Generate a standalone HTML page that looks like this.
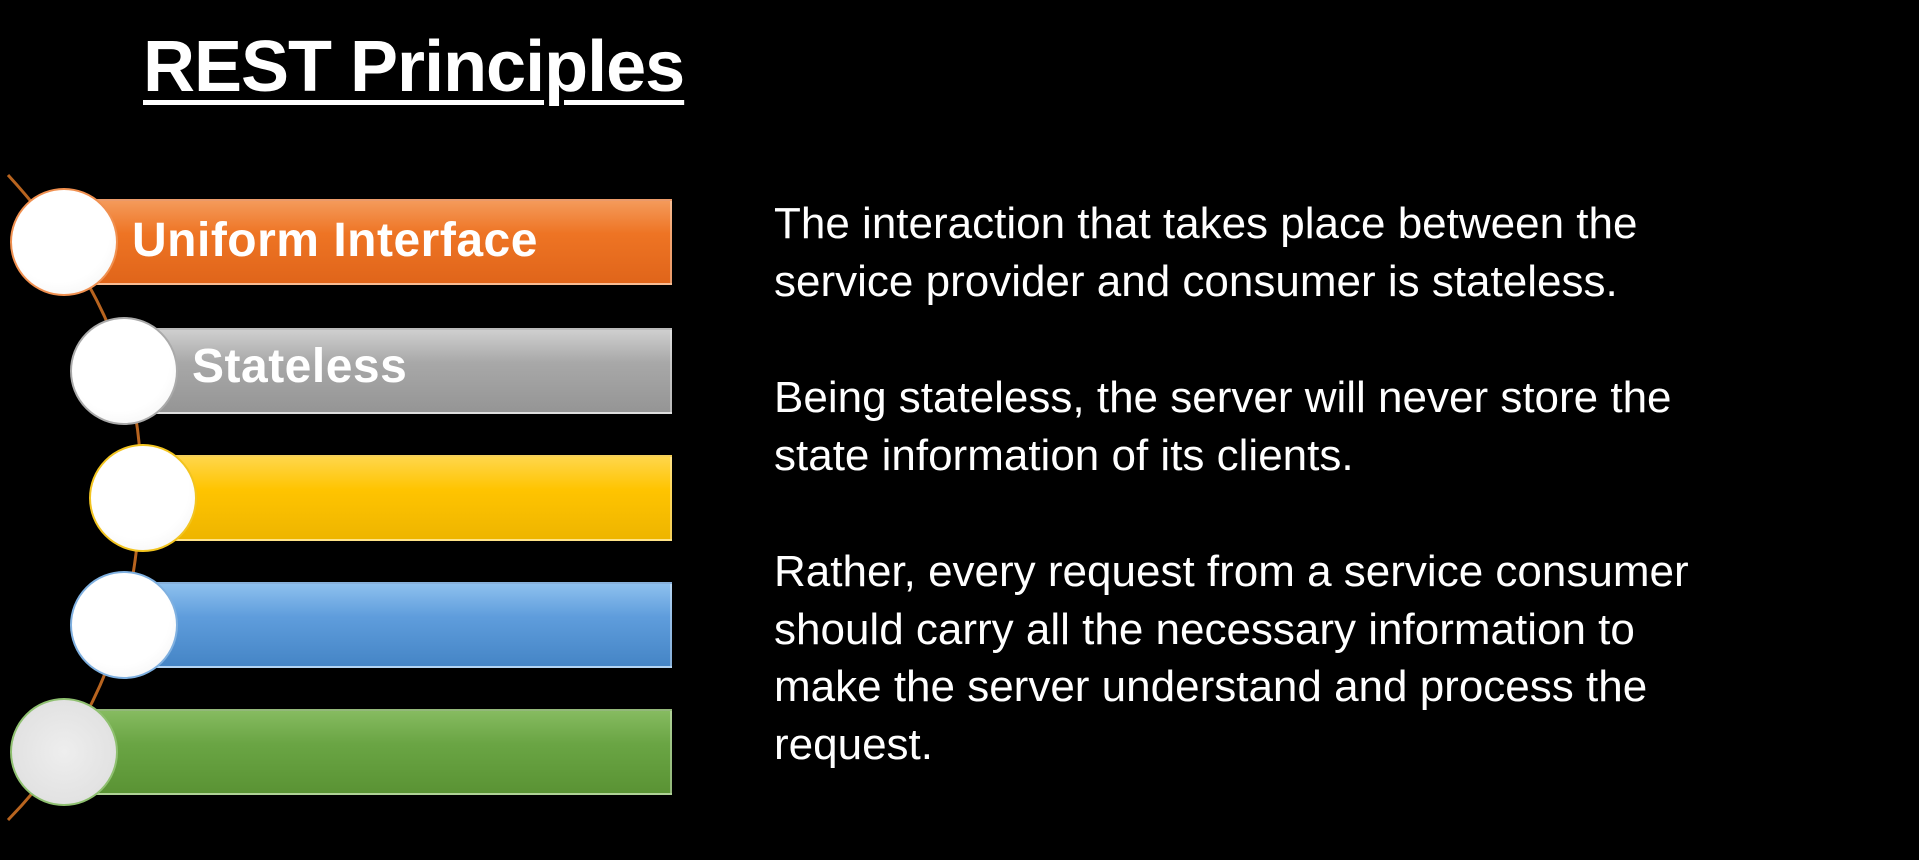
<!DOCTYPE html>
<html><head><style>
body{margin:0;width:1919px;height:860px;background:#000;overflow:hidden;position:relative;font-family:"Liberation Sans",sans-serif}
.t{position:absolute;left:143px;top:26px;font-size:72px;font-weight:bold;color:#fff;text-decoration:underline;text-decoration-thickness:5px;text-underline-offset:9px;letter-spacing:-1px}
.bar{position:absolute;height:86px;border:2px solid rgba(255,255,255,.35);box-sizing:border-box}
.c{position:absolute;width:108px;height:108px;border-radius:50%;background:radial-gradient(circle at 45% 40%,#fff 60%,#eee);box-sizing:border-box}
.lb{position:absolute;color:#fff;font-weight:bold;font-size:48px;line-height:50px;letter-spacing:0.5px}
.p{position:absolute;left:774px;color:#fff;font-size:44px;line-height:57.5px;white-space:nowrap}
</style></head><body>
<div class="t">REST Principles</div>
<svg style="position:absolute;left:0;top:0" width="300" height="860"><path d="M8 175 Q150 330 140 500 Q135 690 8 820" stroke="#b8641f" stroke-width="3" fill="none"/></svg>
<div class="bar" style="left:64px;width:608px;top:199px;background:linear-gradient(#f49a5a,#ee7424 40%,#e0651a)"></div>
<div class="bar" style="left:124px;width:548px;top:328px;background:linear-gradient(#cfcfcf,#a8a8a8 40%,#959595)"></div>
<div class="bar" style="left:143px;width:529px;top:455px;background:linear-gradient(#ffd64a,#ffc400 40%,#eeb500)"></div>
<div class="bar" style="left:124px;width:548px;top:582px;background:linear-gradient(#8dc0ee,#5f9ddc 40%,#4585c6)"></div>
<div class="bar" style="left:64px;width:608px;top:709px;background:linear-gradient(#86bb60,#6aa544 40%,#5a9334)"></div>
<div class="c" style="left:10px;top:188px;border:2px solid #f09050"></div>
<div class="c" style="left:70px;top:317px;border:2px solid #aaa"></div>
<div class="c" style="left:89px;top:444px;border:2px solid #f2c420"></div>
<div class="c" style="left:70px;top:571px;border:2px solid #7fb0e0"></div>
<div class="c" style="left:10px;top:698px;border:2px solid #8fc070;background:radial-gradient(#eee,#ddd)"></div>
<div class="lb" style="left:132px;top:216px">Uniform Interface</div>
<div class="lb" style="left:192px;top:342px">Stateless</div>
<div class="p" style="top:195px">The interaction that takes place between the<br>service provider and consumer is stateless.</div>
<div class="p" style="top:369px">Being stateless, the server will never store the<br>state information of its clients.</div>
<div class="p" style="top:543px">Rather, every request from a service consumer<br>should carry all the necessary information to<br>make the server understand and process the<br>request.</div>
</body></html>
